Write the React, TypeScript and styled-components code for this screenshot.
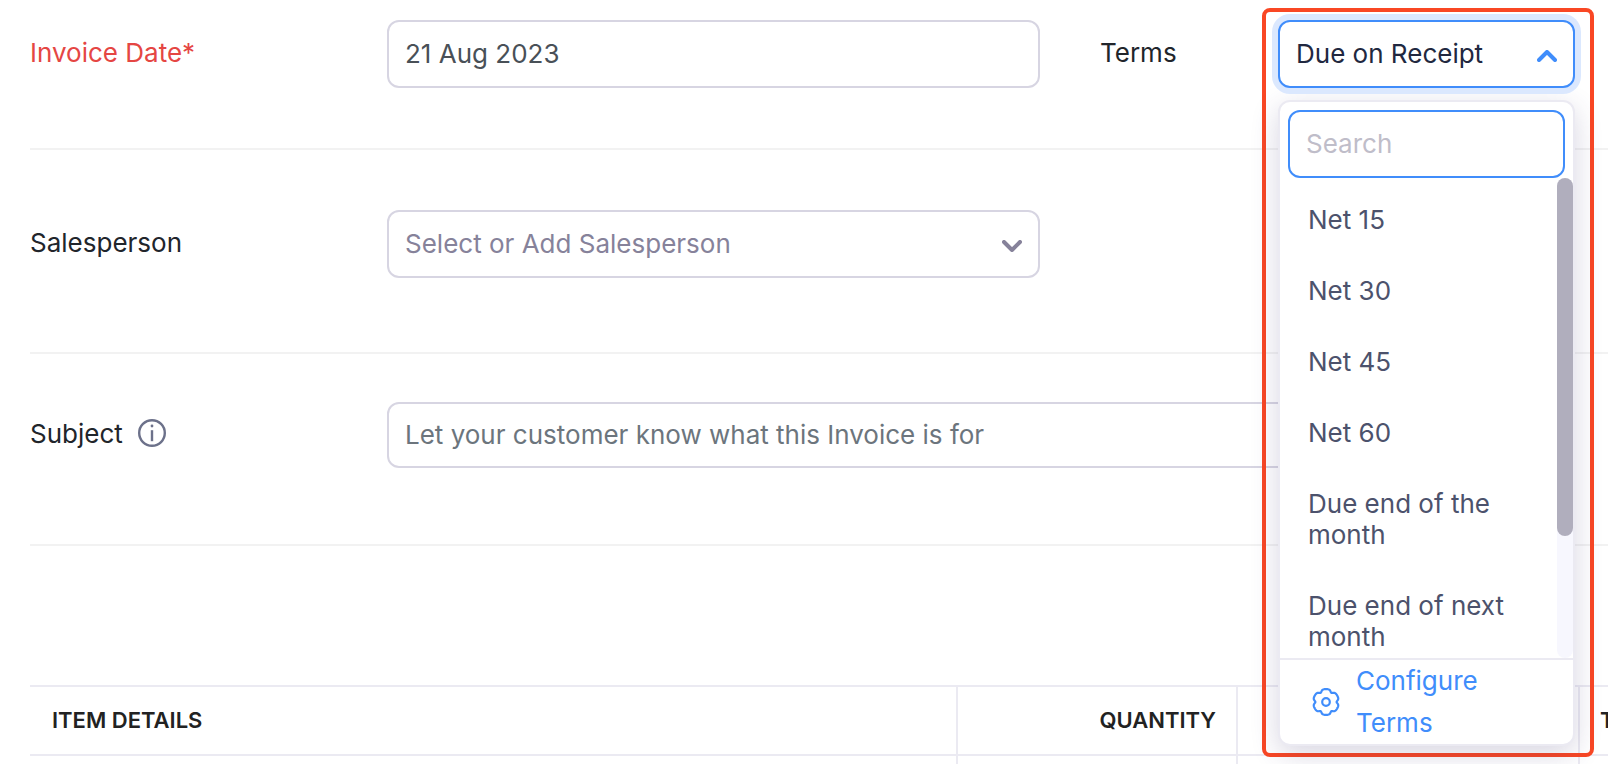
import React, { useState } from 'react';
import styled, { createGlobalStyle, css } from 'styled-components';

const GlobalStyle = createGlobalStyle`
  *, *::before, *::after { box-sizing: border-box; }
  body { margin: 0; background: #fff; }
  body, input, select, button {
    font-family: Inter, 'Liberation Sans', sans-serif;
    font-size: 26px;
    line-height: 31px;
  }
`;

const Page = styled.main`
  display: flex;
  flex-direction: column;
  height: 100vh;
  padding-left: 30px;
  overflow: hidden;
  color: #21252b;
`;

const FormRow = styled.div<{ $top: number; $bottom: number }>`
  display: grid;
  flex: none;
  grid-template-columns: 357px minmax(0, 1fr) 238px 297px;
  align-items: center;
  padding: ${(p) => p.$top}px 33px ${(p) => p.$bottom}px 0;
  border-bottom: 2px solid #f2f2f2;
`;

const Label = styled.label<{ $required?: boolean; $inset?: boolean }>`
  display: flex;
  align-items: center;
  gap: 15px;
  padding-left: ${(p) => (p.$inset ? 60 : 0)}px;
  padding-bottom: 4px;
  color: ${(p) => (p.$required ? '#e54643' : 'inherit')};
`;

const control = css`
  display: block;
  width: 100%;
  height: 68px;
  padding: 0 16px 2px;
  border: 2px solid #d7d5e2;
  border-radius: 12px;
  background: #fff;
  outline: none;
`;

const TextInput = styled.input`
  ${control}
  color: #495057;
  &::placeholder { color: #6c757d; opacity: 1; }
`;

const SubjectInput = styled(TextInput)`
  grid-column: 2 / -1;
  height: 66px;
`;

const SearchInput = styled(TextInput)`
  border-color: #408dfb;
  &::placeholder { color: #bfbdc9; }
`;

const SelectWrap = styled.div`
  display: grid;
  align-items: center;
  > * { grid-area: 1 / 1; }
  > svg { justify-self: end; margin: 4px 18px 0 0; pointer-events: none; }
`;

const Select = styled.select`
  ${control}
  appearance: none;
  color: #86829a;
`;

const TermsField = styled.div`
  position: relative;
`;

const TermsButton = styled.button`
  ${control}
  position: relative;
  z-index: 2;
  display: flex;
  align-items: center;
  justify-content: space-between;
  border-color: #408dfb;
  box-shadow: 0 0 0 6px #dbe8fe;
  color: #212840;
  text-align: left;
  cursor: pointer;
  > svg { margin-top: 6px; }
`;

const Highlight = styled.div`
  position: absolute;
  z-index: 1;
  top: -12px;
  left: -16px;
  right: -19px;
  padding: 88px 15px 7px 12px;
  border: 4px solid #f94724;
  border-radius: 8px;
`;

const Menu = styled.div`
  border: 2px solid #ebeaf2;
  border-radius: 12px;
  background: #fff;
  box-shadow: 0 8px 28px rgba(60, 50, 110, 0.2);
`;

const SearchBox = styled.div`
  padding: 8px 8px 0;
`;

const ListArea = styled.div`
  display: flex;
  height: 480px;
`;

const Options = styled.ul`
  flex: 1;
  margin: 0;
  padding: 6px 0 0;
  overflow: hidden;
  list-style: none;
`;

const Option = styled.li`
  padding: 20px 28px;
  color: #4c526c;
  cursor: pointer;
`;

const Track = styled.div`
  width: 16px;
  border-radius: 8px;
  background: #f7f7fe;
`;

const Thumb = styled.div`
  height: 358px;
  border-radius: 8px;
  background: #b0aebd;
`;

const ConfigureButton = styled.button`
  display: flex;
  align-items: center;
  gap: 16px;
  width: 100%;
  padding: 0 48px 0 32px;
  border: 0;
  border-top: 2px solid #ebeaf2;
  border-radius: 0 0 12px 12px;
  background: none;
  color: #408dfb;
  line-height: 42px;
  text-align: left;
  cursor: pointer;
  > svg { flex: none; }
`;

const Items = styled.table`
  flex: none;
  width: 100%;
  margin-top: 139px;
  border-collapse: separate;
  border-spacing: 0;
  border-top: 2px solid #ebeaf2;
  table-layout: fixed;
`;

const HeadCell = styled.th<{ $numeric?: boolean }>`
  height: 69px;
  padding: 0 20px 2px 22px;
  border-right: 2px solid #ebeaf2;
  border-bottom: 2px solid #ebeaf2;
  color: #222;
  font-size: 22px;
  font-weight: 600;
  line-height: 28px;
  text-align: ${(p) => (p.$numeric ? 'right' : 'left')};
  text-transform: uppercase;
  white-space: nowrap;
  &:last-child { padding-left: 20px; border-right: 0; }
`;

const BodyCell = styled.td`
  height: 80px;
  border-right: 2px solid #ebeaf2;
  &:last-child { border-right: 0; }
`;

const Chevron = ({ up, color }: { up?: boolean; color: string }) => (
  <svg width="20" height="12" viewBox="0 0 20 12" fill="none" stroke={color} strokeWidth="4" strokeLinecap="round" strokeLinejoin="round" aria-hidden="true">
    <path d={up ? 'M2 10l8-8 8 8' : 'M2 2l8 8 8-8'} />
  </svg>
);

const InfoIcon = () => (
  <svg width="28" height="28" viewBox="0 0 28 28" fill="none" stroke="#6c718a" aria-hidden="true">
    <circle cx="14" cy="14" r="12.8" strokeWidth="2.4" />
    <path d="M14 11.2v11" strokeWidth="2.4" />
    <circle cx="14" cy="7" r="1.4" fill="#6c718a" stroke="none" />
  </svg>
);

// Six broad teeth parted by narrow notches, starting with a tooth at the top.
const gearOutline = Array.from({ length: 120 }, (_, i) => {
  const a = (i / 120) * Math.PI * 2;
  const sector = Math.PI / 3;
  const fromNotch = (a % sector) - sector / 2;
  const r = 12.9 - 2.3 * Math.exp(-((fromNotch / 0.17) ** 2));
  return `${(14 + r * Math.sin(a)).toFixed(2)} ${(14 - r * Math.cos(a)).toFixed(2)}`;
}).join('L');

const GearIcon = () => (
  <svg width="28" height="28" viewBox="0 0 28 28" fill="none" stroke="#408dfb" strokeWidth="2.2" strokeLinejoin="round" aria-hidden="true">
    <path d={`M${gearOutline}Z`} />
    <circle cx="14" cy="14" r="3.8" />
  </svg>
);

const TERMS = ['Net 15', 'Net 30', 'Net 45', 'Net 60', 'Due end of the month', 'Due end of next month'];

export default function App() {
  const [term, setTerm] = useState('Due on Receipt');
  return (
    <>
      <GlobalStyle />
      <Page>
        <FormRow $top={20} $bottom={60}>
          <Label htmlFor="date" $required>Invoice Date*</Label>
          <TextInput id="date" defaultValue="21 Aug 2023" />
          <Label htmlFor="terms" $inset>Terms</Label>
          <TermsField>
            <TermsButton id="terms" type="button" aria-haspopup="listbox" aria-expanded="true">
              {term}
              <Chevron up color="#408dfb" />
            </TermsButton>
            <Highlight>
              <Menu>
                <SearchBox>
                  <SearchInput placeholder="Search" aria-label="Search" />
                </SearchBox>
                <ListArea>
                  <Options role="listbox" aria-label="Terms">
                    {TERMS.map((t) => (
                      <Option key={t} role="option" aria-selected={t === term} onClick={() => setTerm(t)}>{t}</Option>
                    ))}
                  </Options>
                  <Track><Thumb /></Track>
                </ListArea>
                <ConfigureButton type="button">
                  <GearIcon />
                  Configure Terms
                </ConfigureButton>
              </Menu>
            </Highlight>
          </TermsField>
        </FormRow>
        <FormRow $top={60} $bottom={74}>
          <Label htmlFor="salesperson">Salesperson</Label>
          <SelectWrap>
            <Select id="salesperson">
              <option>Select or Add Salesperson</option>
            </Select>
            <Chevron color="#86829a" />
          </SelectWrap>
        </FormRow>
        <FormRow $top={48} $bottom={76}>
          <Label htmlFor="subject">Subject <InfoIcon /></Label>
          <SubjectInput id="subject" placeholder="Let your customer know what this Invoice is for" />
        </FormRow>
        <Items>
          <colgroup>
            <col />
            <col width="280" />
            <col width="342" />
            <col width="28" />
          </colgroup>
          <thead>
            <tr>
              <HeadCell scope="col">Item Details</HeadCell>
              <HeadCell scope="col" $numeric>Quantity</HeadCell>
              <HeadCell scope="col" />
              <HeadCell scope="col">Tax</HeadCell>
            </tr>
          </thead>
          <tbody>
            <tr><BodyCell /><BodyCell /><BodyCell /><BodyCell /></tr>
          </tbody>
        </Items>
      </Page>
    </>
  );
}
